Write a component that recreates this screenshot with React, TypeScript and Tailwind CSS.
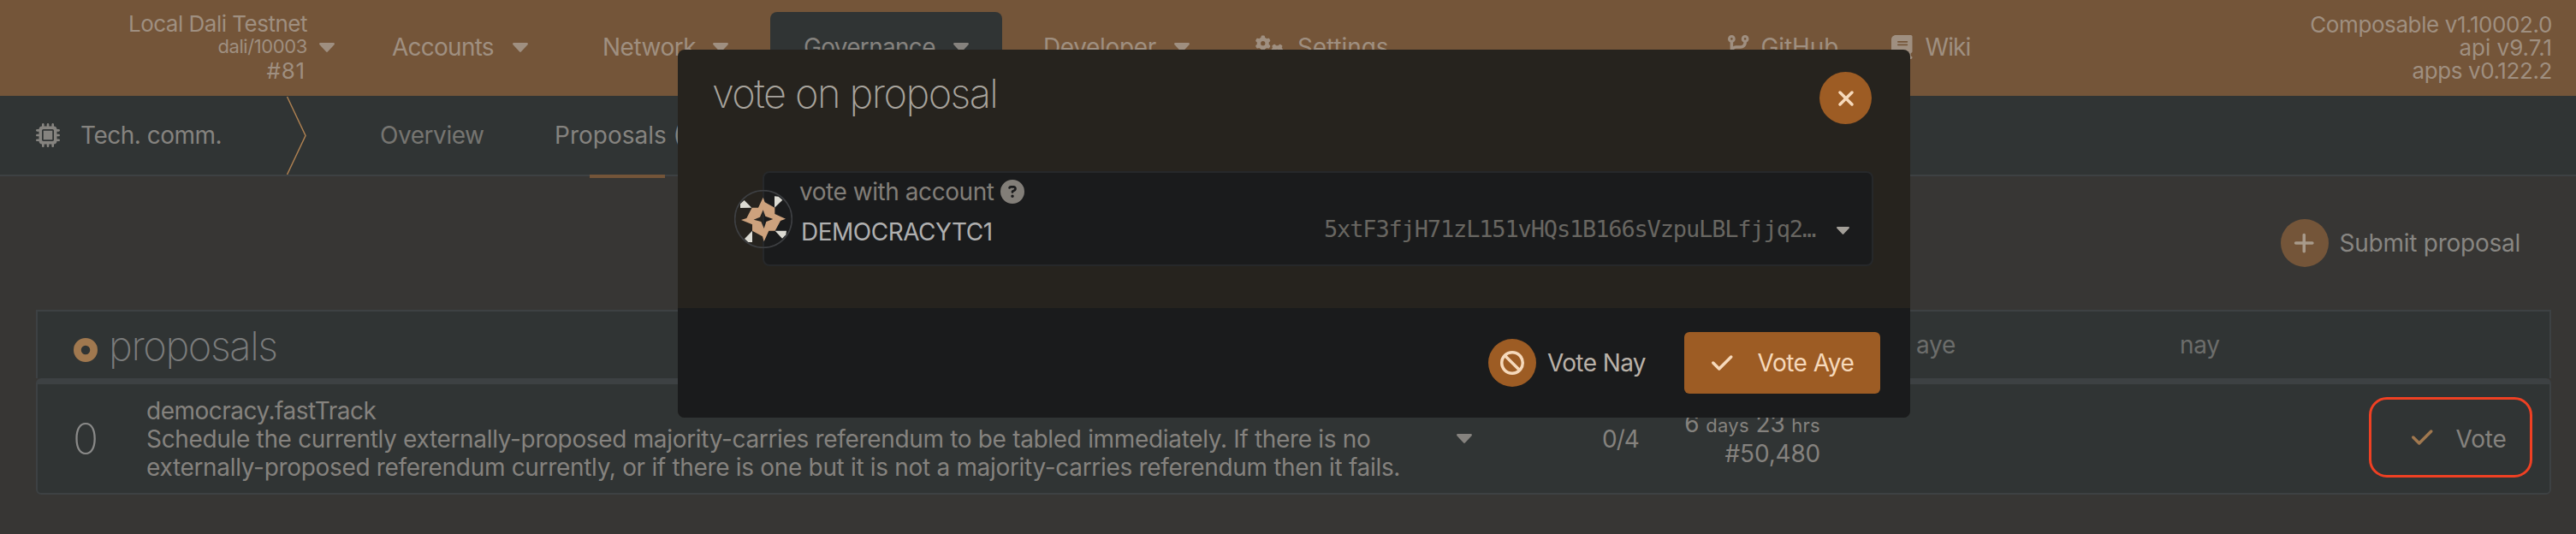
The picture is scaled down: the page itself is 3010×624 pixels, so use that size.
import type { ReactNode } from 'react';
import {
  FaBan,
  FaBook,
  FaCheck,
  FaCircleDot,
  FaCircleQuestion,
  FaCodeBranch,
  FaGears,
  FaMicrochip,
  FaPlus,
  FaXmark,
} from 'react-icons/fa6';

function Caret({ className = '' }: { className?: string }) {
  return (
    <svg viewBox="10 192 300 170" preserveAspectRatio="none" fill="currentColor" className={`shrink-0 ${className}`}>
      <path d="M31.3 192h257.3c17.8 0 26.7 21.5 14.1 34.1L174.1 354.8c-7.8 7.8-20.5 7.8-28.3 0L17.2 226.1C4.6 213.5 13.5 192 31.3 192z" />
    </svg>
  );
}

function MenuItem({ className, children }: { className: string; children: ReactNode }) {
  return (
    <div className={`flex h-full shrink-0 items-center justify-between ${className}`}>
      <span>{children}</span>
      <Caret className="h-[11px] w-[18px]" />
    </div>
  );
}

function TopBar() {
  return (
    <header className="flex h-28 items-center bg-[#745539] pb-0.5 text-[#9f8f80]">
      <div className="flex w-[359px] shrink-0 flex-col text-right text-[26px] leading-[27px] tracking-[-0.5px]">
        <span>Local Dali Testnet</span>
        <span className="text-[22px] tracking-[-0.4px]">dali/10003</span>
        <span className="h-[29px] pr-0.5 leading-[29px] tracking-[0.8px]">#81</span>
      </div>
      <Caret className="ml-[14px] h-[11px] w-[18px]" />
      <MenuItem className="ml-[67px] w-[159px] tracking-[-0.75px]">Accounts</MenuItem>
      <MenuItem className="ml-[87px] w-[147px] tracking-[-0.5px]">Network</MenuItem>
      <div className="ml-[49px] flex h-full shrink-0 items-end">
        <div className="-mb-0.5 flex h-[98px] w-[271px] items-start rounded-t-lg bg-[#303434] px-[39px] text-[#85827e]">
          <MenuItem className="h-[82px]! w-full tracking-[-0.7px]">Governance</MenuItem>
        </div>
      </div>
      <MenuItem className="ml-[48px] w-[171px] tracking-[-0.35px]">Developer</MenuItem>
      <div className="ml-[77px] flex w-[155px] shrink-0 items-center gap-[14px] tracking-[-0.1px]">
        <FaGears className="h-7 w-[35px] shrink-0" />
        Settings
      </div>
      <div className="ml-[397px] flex w-[128px] shrink-0 items-center gap-[14px] tracking-[-0.1px]">
        <FaCodeBranch className="h-7 w-[24.5px] shrink-0" />
        GitHub
      </div>
      <div className="ml-[63px] flex shrink-0 items-center gap-[15px] tracking-[-0.9px]">
        <FaBook className="h-7 w-[24.5px] shrink-0" />
        Wiki
      </div>
      <div className="mt-px ml-auto flex flex-col pr-[28px] text-right text-[26px] leading-[27px]">
        <span className="tracking-[-0.4px]">Composable v1.10002.0</span>
        <span>api v9.7.1</span>
        <span className="tracking-[-0.4px]">apps v0.122.2</span>
      </div>
    </header>
  );
}

function TabBar() {
  return (
    <nav className="flex h-[94px] items-center border-b-2 border-[#3d4143] bg-[#303434] text-[#85837f]">
      <FaMicrochip className="ml-[42px] size-7 shrink-0" />
      <span className="ml-6 w-[240px] shrink-0 tracking-[-0.5px]">Tech. comm.</span>
      <svg viewBox="0 0 26 92" fill="none" className="h-[92px] w-[26px] shrink-0">
        <path d="M1.5 1 L23 46.5 L1.5 92" stroke="#ad8051" strokeWidth="1.5" />
      </svg>
      <span className="ml-[84px] w-[204px] shrink-0 tracking-[-0.45px] text-[#767571]">Overview</span>
      <div className="relative flex h-full w-[172px] shrink-0 items-center">
        <span>Proposals (1)</span>
        <span className="absolute -bottom-1 left-[41px] h-1 w-[88px] bg-[#745539]" />
      </div>
    </nav>
  );
}

function ProposalsTable() {
  return (
    <section className="mx-[42px] w-[2939px]">
      <div className="flex h-20 items-center border-x-2 border-t-2 border-[#3d4143] bg-[#303434] pl-[42px] text-[#6c6d6b]">
        <FaCircleDot className="mt-3 size-7 shrink-0 text-[#a0784f]" />
        <h2 className="mt-0.5 ml-[13px] w-[2112px] shrink-0 text-[47px] leading-[60px] font-extralight tracking-[-1.4px] text-[#7b7c7c]">
          proposals
        </h2>
        <span className="w-[308px] shrink-0 tracking-[-0.25px]">aye</span>
        <span className="tracking-[-0.25px]">nay</span>
      </div>
      <div className="flex h-[136px] items-center rounded-md border-2 border-t-[7px] border-[#3d4143] bg-[#303434] pl-[41px] leading-[33px] text-[#85827e]">
        <span className="w-[86px] shrink-0 text-[50px] leading-[60px] font-extralight text-[#8a8a89]">0</span>
        <div className="mt-0.5 w-[1531px] shrink-0 whitespace-nowrap">
          <p className="tracking-[-0.5px]">democracy.fastTrack</p>
          <p className="tracking-[-0.33px]">
            Schedule the currently externally-proposed majority-carries referendum to be tabled immediately. If there is no
          </p>
          <p className="tracking-[-0.32px]">
            externally-proposed referendum currently, or if there is one but it is not a majority-carries referendum then it fails.
          </p>
        </div>
        <Caret className="h-[11px] w-[18px]" />
        <span className="mt-px ml-[152px] w-[60px] shrink-0 tracking-[-1px]">0/4</span>
        <div className="mt-px w-[195px] shrink-0 text-right tracking-[-0.2px]">
          <p>
            6 <span className="text-[22px] tracking-[0.3px]">days</span> 23{' '}
            <span className="text-[22px] tracking-[0.3px]">hrs</span>
          </p>
          <p>#50,480</p>
        </div>
        <div className="-mt-[3px] ml-[641px] flex h-[94px] w-[191px] shrink-0 items-center rounded-[21px] border-3 border-[#ef4023] pl-[47px]">
          <FaCheck className="h-7 w-[24.5px] shrink-0 text-[#a0784f]" />
          <span className="mt-[5px] ml-[27px] tracking-[-0.2px]">Vote</span>
        </div>
      </div>
    </section>
  );
}

function Identicon() {
  return (
    <svg viewBox="54 95 204 204" className="absolute top-[20px] -left-[35px] size-[68px]">
      <circle cx="156" cy="197" r="100" fill="none" stroke="#3d3f42" strokeWidth="5" />
      <g fill="#dcdbd3">
        <path d="M89 131 L115 157 L75 158 L75 144 Z" />
        <path d="M195 117 L209 118 L223 130 L195 157 Z" />
        <path d="M197 238 L237 238 L235 252 L222 265 Z" />
        <path d="M117 238 L117 278 L103 278 L90 266 Z" />
      </g>
      <path
        fill="#cda27d"
        fillRule="evenodd"
        d="M155 121 L161 138 L196 157 L196 179 L234 196 L216 203 L197 238 L175 238 L158 276 L153 258 L117 238 L117 216 L78 200 L97 194 L116 157 L138 157 Z M155 165 L144 190 L122 199 L148 206 L158 230 L166 206 L190 197 L163 187 Z"
      />
    </svg>
  );
}

function VoteDialog() {
  return (
    <div className="absolute top-[58px] left-[792px] flex h-[430px] w-[1440px] flex-col overflow-hidden rounded-lg bg-[#26231e]">
      <div className="flex h-[142px] shrink-0 items-start justify-between pt-[26px] pr-[45px] pl-10">
        <h1 className="text-[47px] leading-[50px] font-extralight tracking-[-1.6px] text-[#a8a49d]">vote on proposal</h1>
        <button className="flex size-[61px] items-center justify-center rounded-full bg-[#9d5c24] text-[#f6d9bb]">
          <FaXmark className="size-7" />
        </button>
      </div>
      <div className="relative ml-[99px] h-[111px] w-[1298px] rounded-lg border-2 border-[#26282a] bg-[#1a1b1c] pt-2 pl-[41px]">
        <Identicon />
        <div className="flex h-7 items-center gap-2 leading-7 text-[#827e78]">
          <span className="tracking-[-0.45px]">vote with account</span>
          <FaCircleQuestion className="size-7" />
        </div>
        <div className="mt-[15px] flex h-9 items-start justify-between pr-[26px] pl-0.5">
          <span className="leading-9 tracking-[-0.5px] text-[#b0b0b0]">DEMOCRACYTC1</span>
          <div className="flex items-start gap-[25px]">
            <span className="font-['DejaVu_Sans_Mono',monospace] text-[27px] leading-[30px] tracking-[-1.15px] text-[#686661]">
              5xtF3fjH71zL151vHQs1B166sVzpuLBLfjjq2…
            </span>
            <Caret className="mt-3 h-[9px] w-[15px] text-[#a39f98]" />
          </div>
        </div>
      </div>
      <div className="mt-auto flex h-32 shrink-0 items-center justify-end bg-[#1a1b1c] pr-[35px]">
        <button className="flex items-center gap-[13px] tracking-[-0.6px] text-[#bab2a9]">
          <span className="flex size-14 items-center justify-center rounded-full bg-[#9d5c24] text-[#f6d9bb]">
            <FaBan className="size-7" />
          </span>
          Vote Nay
        </button>
        <button className="ml-[45px] flex h-[72px] w-[229px] items-center rounded-md bg-[#9d5c24] pl-8 tracking-[-0.5px] text-[#f6d9bb]">
          <FaCheck className="mr-[29px] h-7 w-[24.5px]" />
          Vote Aye
        </button>
      </div>
    </div>
  );
}

export default function App() {
  return (
    <div className="relative h-[624px] w-[3010px] overflow-hidden bg-[#373634] font-['Inter',sans-serif] text-[28px] leading-[34px] whitespace-nowrap">
      <TopBar />
      <TabBar />
      <main>
        <div className="flex h-[156px] items-center justify-end pr-[65px]">
          <button className="flex items-center gap-[13px] tracking-[-0.25px] text-[#888682]">
            <span className="flex size-14 items-center justify-center rounded-full bg-[#745539] text-[#a89a8a]">
              <FaPlus className="h-7 w-[24.5px]" />
            </span>
            Submit proposal
          </button>
        </div>
        <ProposalsTable />
      </main>
      <VoteDialog />
    </div>
  );
}
